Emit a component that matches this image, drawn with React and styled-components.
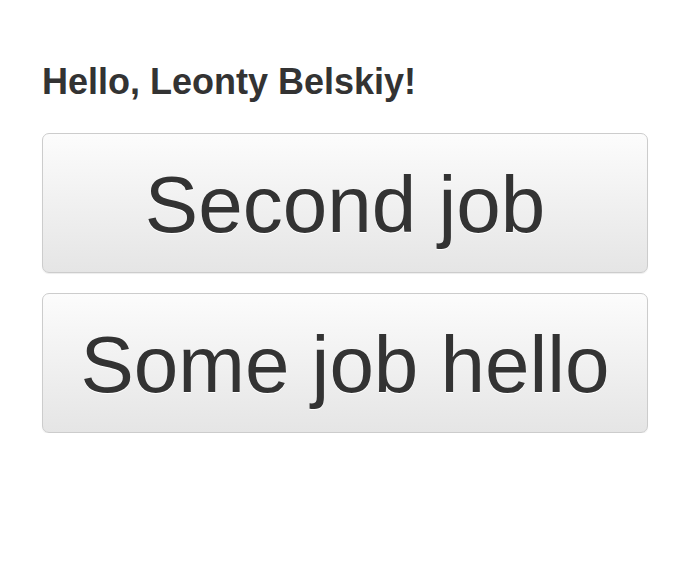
import React from 'react'
import styled, { createGlobalStyle } from 'styled-components'

const GlobalStyle = createGlobalStyle`
  body {
    margin: 0;
    background: #fff;
    font-family: "Liberation Sans", Arial, sans-serif;
    color: #333;
  }
`

const Page = styled.div`
  width: 606px;
  padding: 62px 0 0 42px;
`

const Greeting = styled.h1`
  margin: 0 0 31px;
  font-size: 36px;
  line-height: 1.1;
  font-weight: 700;
  color: #333;
`

const JobList = styled.div`
  display: flex;
  flex-direction: column;
  gap: 20px;
`

const JobButton = styled.button`
  display: flex;
  align-items: center;
  justify-content: center;
  box-sizing: border-box;
  width: 100%;
  height: 140px;
  padding: 4px 0 0;
  border: 1px solid #ccc;
  border-radius: 7px;
  background: linear-gradient(to bottom, #fcfcfc 0%, #e5e5e5 100%);
  box-shadow: inset 0 1px 0 rgba(255, 255, 255, 0.15), 0 1px 1px rgba(0, 0, 0, 0.075);
  font-family: "Liberation Sans", Arial, sans-serif;
  font-size: 80px;
  line-height: 1.15;
  color: #333;
  text-shadow: 0 1px 0 #fff;
  cursor: pointer;
`

const jobs = ['Second job', 'Some job hello']

function App() {
  return (
    <>
      <GlobalStyle />
      <Page>
        <Greeting>Hello, Leonty Belskiy!</Greeting>
        <JobList>
          {jobs.map((job) => (
            <JobButton key={job}>{job}</JobButton>
          ))}
        </JobList>
      </Page>
    </>
  )
}

export default App
